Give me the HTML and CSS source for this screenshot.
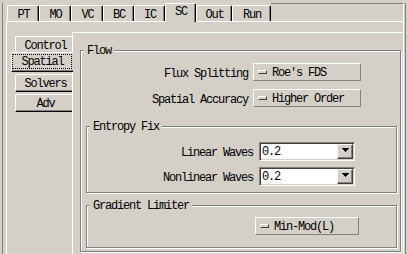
FILE: index.html
```html
<!DOCTYPE html>
<html>
<head>
<meta charset="utf-8">
<link rel="stylesheet" href="styles.css">
</head>
<body>
<div class="window">
  <div class="tabbar">
    <div class="tab">PT</div>
    <div class="tab">MO</div>
    <div class="tab">VC</div>
    <div class="tab n31">BC</div>
    <div class="tab n31">IC</div>
    <div class="tab n31 sel">SC</div>
    <div class="tab w36">Out</div>
    <div class="tab w39">Run</div>
    <div class="tabfill"></div>
  </div>
  <div class="page">
    <div class="vtabs">
      <div class="vtab">Control</div>
      <div class="vtab sel"><span class="focus">Spatial</span></div>
      <div class="vtab gap">Solvers</div>
      <div class="vtab gap">Adv</div>
    </div>
    <div class="vpanel">
      <div class="group flow">
        <div class="gtitle">Flow</div>
        <div class="form">
          <label>Flux Splitting</label>
          <div class="mbtn"><span class="ind"></span><span>Roe's FDS</span></div>
          <label>Spatial Accuracy</label>
          <div class="mbtn"><span class="ind"></span><span>Higher Order</span></div>
        </div>
        <div class="group entropy">
          <div class="gtitle">Entropy Fix</div>
          <div class="form form2">
            <label>Linear Waves</label>
            <div class="combo"><span class="val">0.2</span><span class="arrow"><svg width="7" height="4" viewBox="0 0 7 4"><path d="M0 0h7v1H0zM1 1h5v1H1zM2 2h3v1H2zM3 3h1v1H3z" fill="#000"/></svg></span></div>
            <label>Nonlinear Waves</label>
            <div class="combo"><span class="val">0.2</span><span class="arrow"><svg width="7" height="4" viewBox="0 0 7 4"><path d="M0 0h7v1H0zM1 1h5v1H1zM2 2h3v1H2zM3 3h1v1H3z" fill="#000"/></svg></span></div>
          </div>
        </div>
        <div class="group gradient">
          <div class="gtitle">Gradient Limiter</div>
          <div class="mbtn limiter"><span class="ind"></span><span>Min-Mod(L)</span></div>
        </div>
      </div>
    </div>
  </div>
</div>
</body>
</html>
```

FILE: styles.css
```css
* { box-sizing: border-box; }
html, body { margin: 0; padding: 0; background: #d4d0c8; }
body {
  width: 407px; height: 254px; overflow: hidden;
  font-family: "Liberation Mono", "DejaVu Sans Mono", monospace;
  font-size: 12px; letter-spacing: -1.2px; line-height: 12px; color: #000;
}
.window {
  margin: 3px 0 0 2px;
  border-left: 1px solid #808080;
  border-right: 1px solid #808080;
  width: 404px; height: 251px;
  display: flex; flex-direction: column;
}
.tabbar {
  display: flex; align-items: flex-end;
  height: 18px; flex: none;
  padding-left: 4px; padding-right: 1px;
}
.tab {
  width: 32px; height: 16px;
  border-top: 1px solid #fff; border-left: 1px solid #fff; border-right: 1px solid #000;
  box-shadow: inset -1px 0 #808080;
  border-top-left-radius: 2px; border-top-right-radius: 2px;
  display: flex; align-items: center; justify-content: center;
  padding: 2px 0 0 1px; background: #d4d0c8;
}
.tab.n31 { width: 31px; }
.tab.w36 { width: 36px; }
.tab.w39 { width: 39px; }
.tab.sel {
  height: 19px; margin-bottom: -1px; position: relative; z-index: 1;
  padding-top: 0; padding-bottom: 3px;
}
.tabfill {
  flex: 1; align-self: stretch;
  border-top: 1px solid #808080; border-right: 1px solid #fff;
}
.page {
  flex: 1; display: flex; min-height: 0;
  margin-left: 3px; margin-right: 1px;
  border-top: 1px solid #fff; border-left: 1px solid #fff; border-right: 1px solid #fff;
  padding-top: 10px;
}
.vtabs {
  width: 65px; flex: none;
  padding: 4px 0 0 4px;
  display: flex; flex-direction: column;
}
.vtab {
  height: 18px; margin-left: 4px;
  border-top: 1px solid #fff; border-left: 1px solid #fff; border-bottom: 1px solid #000;
  box-shadow: inset 0 -1px #808080;
  border-top-left-radius: 2px;
  display: flex; align-items: center; justify-content: center;
  padding: 1px 0 0 3px; background: #d4d0c8;
}
.vtab.gap { margin-top: 2px; }
.vtab.sel {
  height: 20px; margin: -2px -1px 0 0;
  position: relative; z-index: 1;
  padding: 1px 0 0 0; align-items: flex-start; justify-content: flex-start;
}
.focus {
  display: flex; align-items: center; justify-content: center;
  width: 60px; height: 15px;
  border: 1px dotted #000;
  padding: 1px 0 0 1px;
}
.vpanel {
  flex: 1; min-width: 0;
  border-top: 1px solid #fff; border-left: 1px solid #fff;
  padding: 17px 2px 0 7px;
}
.group {
  border: 1px solid #808080;
  box-shadow: inset 1px 1px #fff, 1px 1px #fff;
}
.flow { padding: 0 3px 3px 5px; }
.gtitle {
  width: max-content; height: 12px;
  margin: -6px 0 0 -2px; padding: 0 3px;
  background: #d4d0c8; white-space: nowrap;
}
.form {
  display: grid;
  grid-template-columns: 161px 108px;
  column-gap: 6px; row-gap: 8px;
  margin-top: 6px; align-items: center;
}
.form label { text-align: right; white-space: nowrap; padding-top: 3px; margin-right: -1px; }
.mbtn {
  height: 18px;
  border: 1px solid; border-color: #fff #808080 #808080 #fff;
  display: flex; align-items: center; gap: 5px;
  padding: 2px 0 0 4px; white-space: nowrap;
}
.ind {
  width: 9px; height: 4px; flex: none;
  border: 1px solid; border-color: #fff #404040 #404040 #fff;
  margin-top: -3px;
}
.entropy { margin-top: 19px; padding: 0 5px 6px 5px; }
.form2 {
  grid-template-columns: 160px 96px;
  column-gap: 7px; row-gap: 6px; margin-top: 9px;
}
.combo {
  height: 19px; background: #fff;
  border: 1px solid; border-color: #808080 #fff #fff #808080;
  box-shadow: inset 1px 1px #404040, inset -1px -1px #d4d0c8;
  display: flex; padding: 1px;
}
.val { flex: 1; padding: 2px 0 0 1px; line-height: 13px; }
.arrow {
  width: 16px; flex: none;
  background: #d4d0c8;
  border: 1px solid; border-color: #fff #404040 #404040 #fff;
  box-shadow: inset -1px -1px #808080;
  display: flex; justify-content: center; align-items: flex-start;
  padding-top: 3px;
}
.arrow svg { display: block; shape-rendering: crispEdges; }
.gradient { margin-top: 12px; padding: 0 5px 12px 5px; }
.limiter { width: 104px; margin: 5px 0 0 163px; }
```
